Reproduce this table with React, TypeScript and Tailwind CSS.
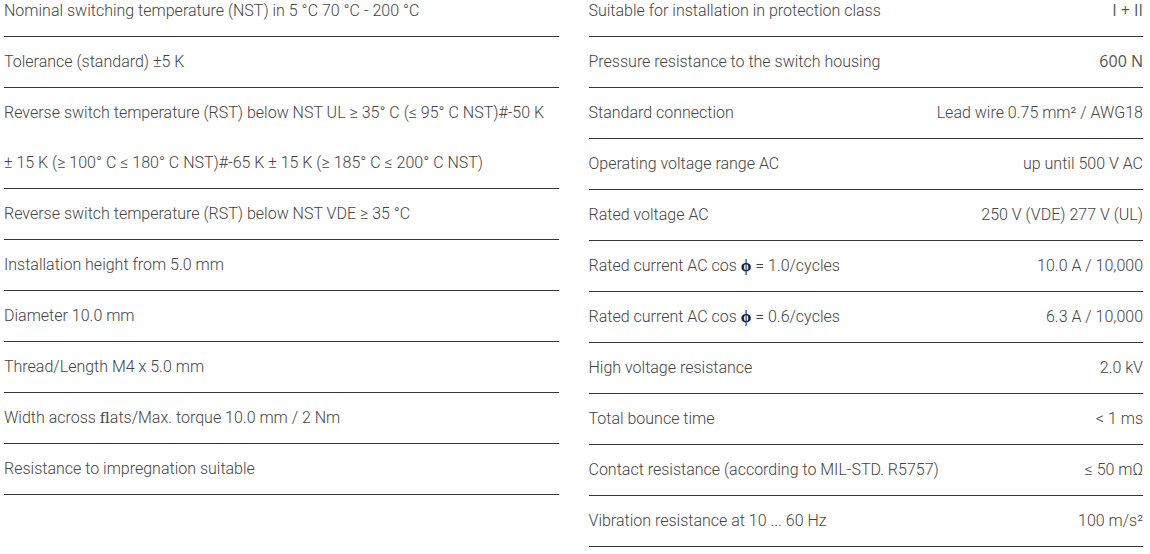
import React from "react";

const left: React.ReactNode[] = [
  "Nominal switching temperature (NST) in 5 °C 70 °C - 200 °C",
  "Tolerance (standard) ±5 K",
  "Reverse switch temperature (RST) below NST UL ≥ 35° C (≤ 95° C NST)#-50 K ±\u00a015 K (≥ 100° C ≤ 180° C NST)#-65 K ± 15 K (≥ 185° C ≤ 200° C NST)",
  "Reverse switch temperature (RST) below NST VDE ≥ 35 °C",
  "Installation height from 5.0 mm",
  "Diameter 10.0 mm",
  "Thread/Length M4 x 5.0 mm",
  <>
    Width across <span className="font-['DejaVu_Serif'] text-[15px] leading-none">ﬂ</span>ats/Max. torque 10.0 mm / 2 Nm
  </>,
  "Resistance to impregnation suitable",
];

const phi = <span className="font-['Liberation_Serif'] font-bold text-[17px] text-[#1a1a2a] leading-none">ϕ</span>;
const os = (t: string) => <span className="font-['Open_Sans'] font-normal text-[16px] text-[#555] leading-none">{t}</span>;

const right: [React.ReactNode, React.ReactNode][] = [
  ["Suitable for installation in protection class", os("I + II")],
  ["Pressure resistance to the switch housing", os("600 N")],
  ["Standard connection", "Lead wire 0.75 mm² / AWG18"],
  ["Operating voltage range AC", "up until 500 V AC"],
  ["Rated voltage AC", "250 V (VDE) 277 V (UL)"],
  [<>Rated current AC cos {phi} = 1.0/cycles</>, "10.0 A / 10,000"],
  [<>Rated current AC cos {phi} = 0.6/cycles</>, "6.3 A / 10,000"],
  ["High voltage resistance", "2.0 kV"],
  ["Total bounce time", "< 1 ms"],
  ["Contact resistance (according to MIL-STD. R5757)", "≤ 50 mΩ"],
  ["Vibration resistance at 10 ... 60 Hz", "100 m/s²"],
];

export default function App() {
  return (
    <div className="w-[1150px] h-[554px] overflow-hidden bg-white font-['Roboto'] font-light text-[16px] text-[#444]">
      <div className="mt-[-14px] pl-[4px] pr-[7px] grid grid-cols-2 gap-x-[30px] items-start">
        <div className="flex flex-col">
          {left.map((t, i) => (
            <div key={i} className="leading-[50px] border-b border-[#333635]">
              {t}
            </div>
          ))}
        </div>
        <div className="flex flex-col">
          {right.map(([k, v], i) => (
            <div key={i} className="h-[51px] leading-[50px] border-b border-[#333635] flex justify-between">
              <span>{k}</span>
              <span>{v}</span>
            </div>
          ))}
        </div>
      </div>
    </div>
  );
}
